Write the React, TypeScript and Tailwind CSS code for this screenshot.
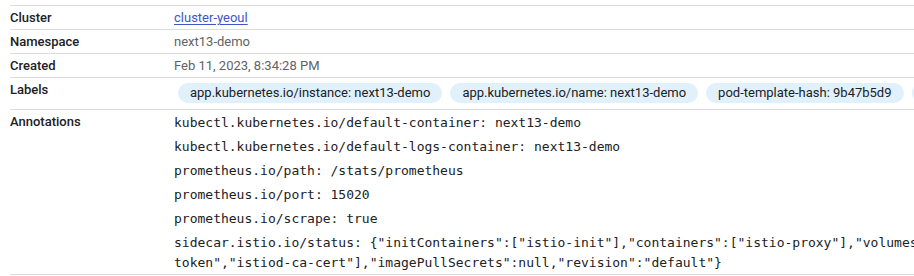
const labels = [
  'app.kubernetes.io/instance: next13-demo',
  'app.kubernetes.io/name: next13-demo',
  'pod-template-hash: 9b47b5d9',
  'security.istio.io/tlsMode: istio',
]

const annotations = [
  'kubectl.kubernetes.io/default-container: next13-demo',
  'kubectl.kubernetes.io/default-logs-container: next13-demo',
  'prometheus.io/path: /stats/prometheus',
  'prometheus.io/port: 15020',
  'prometheus.io/scrape: true',
  'sidecar.istio.io/status: {"initContainers":["istio-init"],"containers":["istio-proxy"],"volumes":["workload-socket","credential-socket","workload-certs","istio-envoy","istio-data","istio-podinfo","istio-token","istiod-ca-cert"],"imagePullSecrets":null,"revision":"default"}',
]

function Row({ label, children, className }: { label: string; children: React.ReactNode; className?: string }) {
  return (
    <div className="flex border-b border-[#dadce0]">
      <div className="w-[164px] shrink-0 leading-[23px] font-medium text-[#202124]">{label}</div>
      <div className={className ?? 'leading-[23px] text-[#5f6368]'}>{children}</div>
    </div>
  )
}

export default function App() {
  return (
    <div
      className="h-[276px] w-[914px] overflow-hidden bg-white pt-[5px] text-[13px]"
      style={{ fontFamily: 'Roboto, "Liberation Sans", sans-serif' }}
    >
      <div className="ml-[10px] w-[1820px] border-t border-[#dadce0]">
        <Row label="Cluster">
          <a href="#" className="text-[#3f55c7] underline underline-offset-2">
            cluster-yeoul
          </a>
        </Row>
        <Row label="Namespace">next13-demo</Row>
        <Row label="Created">Feb 11, 2023, 8:34:28 PM</Row>
        <Row label="Labels" className="flex pt-[5px] pb-[6px]">
          {labels.map((l) => (
            <span
              key={l}
              className="mx-1 h-5 rounded-full bg-[#e1f1fc] px-3 leading-5 whitespace-nowrap text-[#202124]"
            >
              {l}
            </span>
          ))}
        </Row>
        <Row label="Annotations" className="flex min-w-0 flex-1 flex-col gap-1 pt-[3px] pb-px">
          {annotations.map((a) => (
            <div
              key={a}
              className="leading-5 text-[#202124]"
              style={{ fontFamily: '"DejaVu Sans Mono", "Liberation Mono", monospace' }}
            >
              {a}
            </div>
          ))}
        </Row>
      </div>
    </div>
  )
}
